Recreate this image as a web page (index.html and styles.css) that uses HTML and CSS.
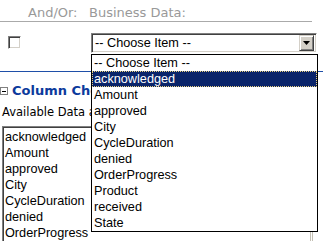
FILE: index.html
```html
<!DOCTYPE html>
<html lang="en">
<head>
    <meta charset="UTF-8">
    <title>Column Chooser</title>
    <link rel="stylesheet" href="styles.css">
</head>
<body>
    <div class="hdr">
        <span class="hdr-andor">And/Or:</span>
        <span>Business Data:</span>
    </div>

    <div class="row">
        <span class="checkbox"></span>
        <div class="select-wrap">
            <div class="select">
                <span class="select-text">-- Choose Item --</span>
                <span class="select-btn">
                    <svg width="7" height="4" viewBox="0 0 7 4"><path d="M0 0h7L3.5 4z" fill="#000"/></svg>
                </span>
            </div>
            <ul class="dropdown">
                <li>-- Choose Item --</li>
                <li class="active">acknowledged</li>
                <li>Amount</li>
                <li>approved</li>
                <li>City</li>
                <li>CycleDuration</li>
                <li>denied</li>
                <li>OrderProgress</li>
                <li>Product</li>
                <li>received</li>
                <li>State</li>
            </ul>
        </div>
    </div>

    <div class="section">
        <div class="sec-title">
            <span class="toggle"></span>
            <span>Column Chooser</span>
        </div>
        <div class="label">Available Data and Selected Columns</div>
        <div class="lists">
            <ul class="listbox">
                <li>acknowledged</li>
                <li>Amount</li>
                <li>approved</li>
                <li>City</li>
                <li>CycleDuration</li>
                <li>denied</li>
                <li>OrderProgress</li>
            </ul>
            <div class="right-box"></div>
        </div>
    </div>
</body>
</html>
```

FILE: styles.css
```css
body {
    margin: 0;
    background: #fff;
    font-family: "DejaVu Sans", Verdana, sans-serif;
    overflow: hidden;
}

ul {
    list-style: none;
    margin: 0;
    padding: 0;
}

.hdr {
    width: 312px;
    box-sizing: border-box;
    padding: 5px 0 1px 28px;
    line-height: 15px;
    font-size: 13px;
    color: #999;
    border-bottom: 1px solid #aaa;
    display: flex;
}

.hdr-andor {
    width: 61px;
}

.row {
    display: flex;
    align-items: flex-start;
    margin-top: 11px;
}

.checkbox {
    width: 13px;
    height: 13px;
    box-sizing: border-box;
    margin: 3px 0 0 8px;
    background: #fff;
    border-top: 1px solid #808080;
    border-left: 1px solid #808080;
    border-right: 1px solid #fff;
    border-bottom: 1px solid #fff;
    box-shadow: inset 1px 1px 0 #404040, inset -1px -1px 0 #d4d0c8;
}

.select-wrap {
    position: relative;
    margin-left: 70px;
}

.select {
    width: 226px;
    height: 20px;
    box-sizing: border-box;
    border-top: 1px solid #808080;
    border-left: 1px solid #808080;
    border-right: 1px solid #fff;
    border-bottom: 1px solid #fff;
    box-shadow: inset 1px 1px 0 #404040, inset -1px -1px 0 #d4d0c8;
    display: flex;
    align-items: center;
    padding: 2px 2px 2px 3px;
    font-family: "Liberation Sans", Arial, sans-serif;
    font-size: 12.7px;
}

.select-text {
    flex: 1;
}

.select-btn {
    width: 15px;
    height: 16px;
    box-sizing: border-box;
    background: #d4d0c8;
    border-top: 1px solid #d4d0c8;
    border-left: 1px solid #d4d0c8;
    border-right: 1px solid #404040;
    border-bottom: 1px solid #404040;
    box-shadow: inset 1px 1px 0 #fff, inset -1px -1px 0 #808080;
    display: flex;
    align-items: center;
    justify-content: center;
}

.dropdown {
    position: absolute;
    top: 21px;
    left: 0;
    width: 227px;
    box-sizing: border-box;
    border: 1px solid #000;
    background: #fff;
    font-family: "Liberation Sans", Arial, sans-serif;
    font-size: 12.7px;
    z-index: 2;
}

.dropdown li {
    height: 16px;
    line-height: 16px;
    padding-left: 2px;
}

.dropdown li.active {
    background: #0a246a;
    color: #fff;
    outline: 1px dotted #e8d080;
    outline-offset: -1px;
}

.section {
    margin-top: 18px;
    border-top: 1px solid #1f4fa8;
}

.sec-title {
    display: flex;
    align-items: center;
    padding-top: 11px;
    line-height: 15px;
    font-size: 13px;
    font-weight: bold;
    color: #0c3a9c;
}

.toggle {
    position: relative;
    width: 8px;
    height: 8px;
    box-sizing: border-box;
    border: 1px solid #808080;
    margin-right: 4px;
}

.toggle::after {
    content: "";
    position: absolute;
    left: 1px;
    right: 1px;
    top: 3px;
    height: 1px;
    background: #000;
}

.label {
    margin-top: 7px;
    padding-left: 2px;
    line-height: 14px;
    font-size: 11.5px;
    color: #000;
    white-space: nowrap;
}

.lists {
    display: flex;
    margin-top: 7px;
}

.listbox {
    width: 110px;
    height: 130px;
    margin-left: 2px;
    box-sizing: border-box;
    border-top: 1px solid #808080;
    border-left: 1px solid #808080;
    border-right: 1px solid #fff;
    box-shadow: inset 1px 1px 0 #404040;
    padding: 2px 0 0 2px;
    font-family: "Liberation Sans", Arial, sans-serif;
    font-size: 12.7px;
}

.listbox li {
    height: 16px;
    line-height: 16px;
    white-space: nowrap;
}

.right-box {
    margin-left: auto;
    width: 10px;
    height: 130px;
    border-left: 3px double #c4c0b4;
}
```
